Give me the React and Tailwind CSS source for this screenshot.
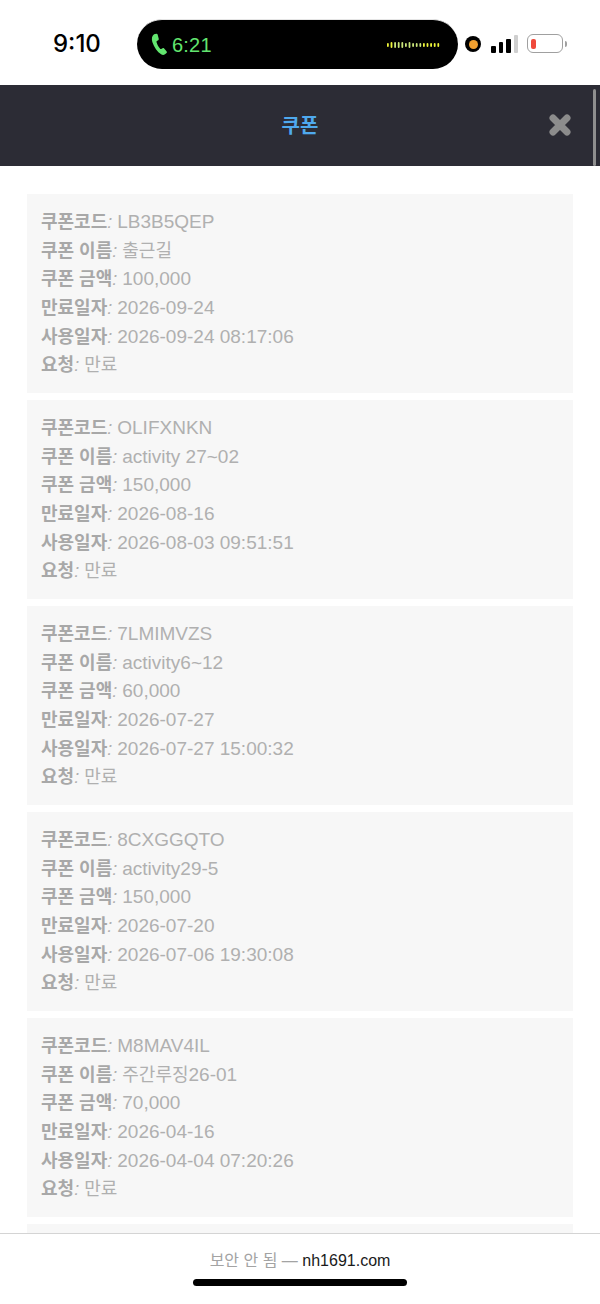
import React from 'react';

const coupons = [
  { code: 'LB3B5QEP', name: '출근길', amount: '100,000', expires: '2026-09-24', used: '2026-09-24 08:17:06' },
  { code: 'OLIFXNKN', name: 'activity 27~02', amount: '150,000', expires: '2026-08-16', used: '2026-08-03 09:51:51' },
  { code: '7LMIMVZS', name: 'activity6~12', amount: '60,000', expires: '2026-07-27', used: '2026-07-27 15:00:32' },
  { code: '8CXGGQTO', name: 'activity29-5', amount: '150,000', expires: '2026-07-20', used: '2026-07-06 19:30:08' },
  { code: 'M8MAV4IL', name: '주간루징26-01', amount: '70,000', expires: '2026-04-16', used: '2026-04-04 07:20:26' },
];

const waveHeights = [2, 3, 3, 3, 3, 2, 3, 2, 2, 2, 2, 2, 2, 2, 2];

// latin text sits a size up from the hangul in the reference
const Value = ({ text }) =>
  text.split(/([가-힣]+)/).map((part, i) =>
    /[가-힣]/.test(part) ? (
      <span key={i}>{part}</span>
    ) : (
      <span key={i} className="text-[19px]">{part}</span>
    )
  );

const Row = ({ label, value }) => (
  <div className="h-[28.7px] leading-[28.7px] whitespace-nowrap">
    <span className="font-bold text-[#a8a8a8]">{label}</span>
    <span className="italic text-[#b0b0b0]">: </span>
    <span className="text-[#b0b0b0]"><Value text={value} /></span>
  </div>
);

const CouponCard = ({ coupon }) => (
  <div className="bg-[#f7f7f7] h-[199px] mb-[7px] px-[14px] pt-[14px] text-[18px] shrink-0">
    <Row label="쿠폰코드" value={coupon.code} />
    <Row label="쿠폰 이름" value={coupon.name} />
    <Row label="쿠폰 금액" value={coupon.amount} />
    <Row label="만료일자" value={coupon.expires} />
    <Row label="사용일자" value={coupon.used} />
    <Row label="요청" value="만료" />
  </div>
);

const StatusBar = () => (
  <div className="h-[84px] bg-white flex items-start pt-[19px] pl-[53px]">
    <span className="w-[84px] h-[50px] flex items-center text-[24px] font-medium font-['Inter',sans-serif] text-black">9:10</span>
    <div className="w-[321px] h-[50px] rounded-[25px] bg-black flex items-center pl-[14px] pr-[18px] border-t border-[#e5e5e5]">
      <svg width="17" height="23" viewBox="0 0 18 24" className="text-[#62e56f]">
        <path
          d="M3.2 1.2 5.6.6c.7-.1 1.2.2 1.4.8l1.2 4.6c.2.6 0 1.1-.5 1.4L6.200 8.400c-.4.3-.5.6-.3 1.100.7 2.500 2 5 3.800 7 .3.400.7.400 1.100.200l1.500-.800c.5-.300 1-.200 1.400.200l2.900 3.400c.4.500.4 1-.100 1.400l-1.700 1.500c-1.100 1-2.500 1.100-3.700.300C6.500 19.900 3.300 14.900 1.400 9.400.500 6.300.800 2.700 3.200 1.200Z"
          fill="currentColor"
        />
      </svg>
      <span className="ml-[4px] text-[20px] text-[#62e56f] font-normal tracking-[0.2px]">6:21</span>
      <svg width="54" height="10" viewBox="0 0 54 10" className="ml-auto">
        {waveHeights.map((h, i) => (
          <rect
            key={i}
            x={1 + i * 3.6}
            y={5 - h}
            width="1.800"
            height={h * 2}
            rx="0.900"
            fill={i < 2 || i > 9 ? '#eef53a' : '#c9e57a'}
          />
        ))}
      </svg>
    </div>
    <div className="ml-[7px] w-[16px] h-[16px] mt-[17px] rounded-full bg-black flex items-center justify-center">
      <div className="w-[9px] h-[9px] rounded-full bg-[#f0a030]" />
    </div>
    <div className="ml-[10px] mt-[16px] h-[18px] flex items-end gap-[3px]">
      <div className="w-[4.500px] h-[7px] rounded-[1px] bg-black" />
      <div className="w-[4.500px] h-[11px] rounded-[1px] bg-black" />
      <div className="w-[4.500px] h-[14px] rounded-[1px] bg-black" />
      <div className="w-[4.500px] h-[18px] rounded-[1px] bg-[#cfcfcf]" />
    </div>
    <div className="ml-[9px] mt-[15px] w-[36px] h-[19px] rounded-[6px] border-[1.500px] border-[#a0a0a0] pl-[3px] flex items-center">
      <div className="w-[5px] h-[10px] rounded-[2px] bg-[#ef4a3c]" />
    </div>
    <div className="ml-[1.500px] mt-[22px] w-[2px] h-[6px] rounded-r-[2px] bg-[#a0a0a0]" />
  </div>
);

const Header = () => (
  <div className="relative h-[81px] mt-px bg-[#2c2c35] flex items-center justify-center">
    <span className="text-[20px] font-bold text-[#4fa9ee]">쿠폰</span>
    <svg width="24" height="24" viewBox="0 0 24 24" className="absolute right-[28px] top-[28px]">
      <path d="M5 5 19 19M19 5 5 19" stroke="#8c8c8c" strokeWidth="7" strokeLinecap="round" />
    </svg>
    <div className="absolute right-[4px] top-[4px] bottom-0 w-[3px] rounded-full bg-[#8f8f8f]" />
  </div>
);

const BottomBar = () => (
  <div className="h-[71px] bg-white border-t border-[#d4d4d4] flex flex-col items-center shrink-0">
    <div className="mt-[17px] h-[20px] leading-[20px] text-[16px] whitespace-nowrap">
      <span className="text-[#a3a3a3]">보안 안 됨 — </span>
      <span className="text-[#1a1a1a]">nh1691.com</span>
    </div>
    <div className="mt-[8px] w-[214px] h-[7px] rounded-full bg-black" />
  </div>
);

export default function App() {
  return (
    <div className="w-[600px] h-[1304px] bg-white flex flex-col overflow-hidden font-['Liberation_Sans','Noto_Sans_CJK_KR',sans-serif]">
      <StatusBar />
      <Header />
      <div className="flex-1 overflow-hidden px-[27px] pt-[28px] flex flex-col">
        {coupons.map((c) => (
          <CouponCard key={c.code} coupon={c} />
        ))}
        <div className="bg-[#f7f7f7] h-[199px] shrink-0" />
      </div>
      <BottomBar />
    </div>
  );
}
